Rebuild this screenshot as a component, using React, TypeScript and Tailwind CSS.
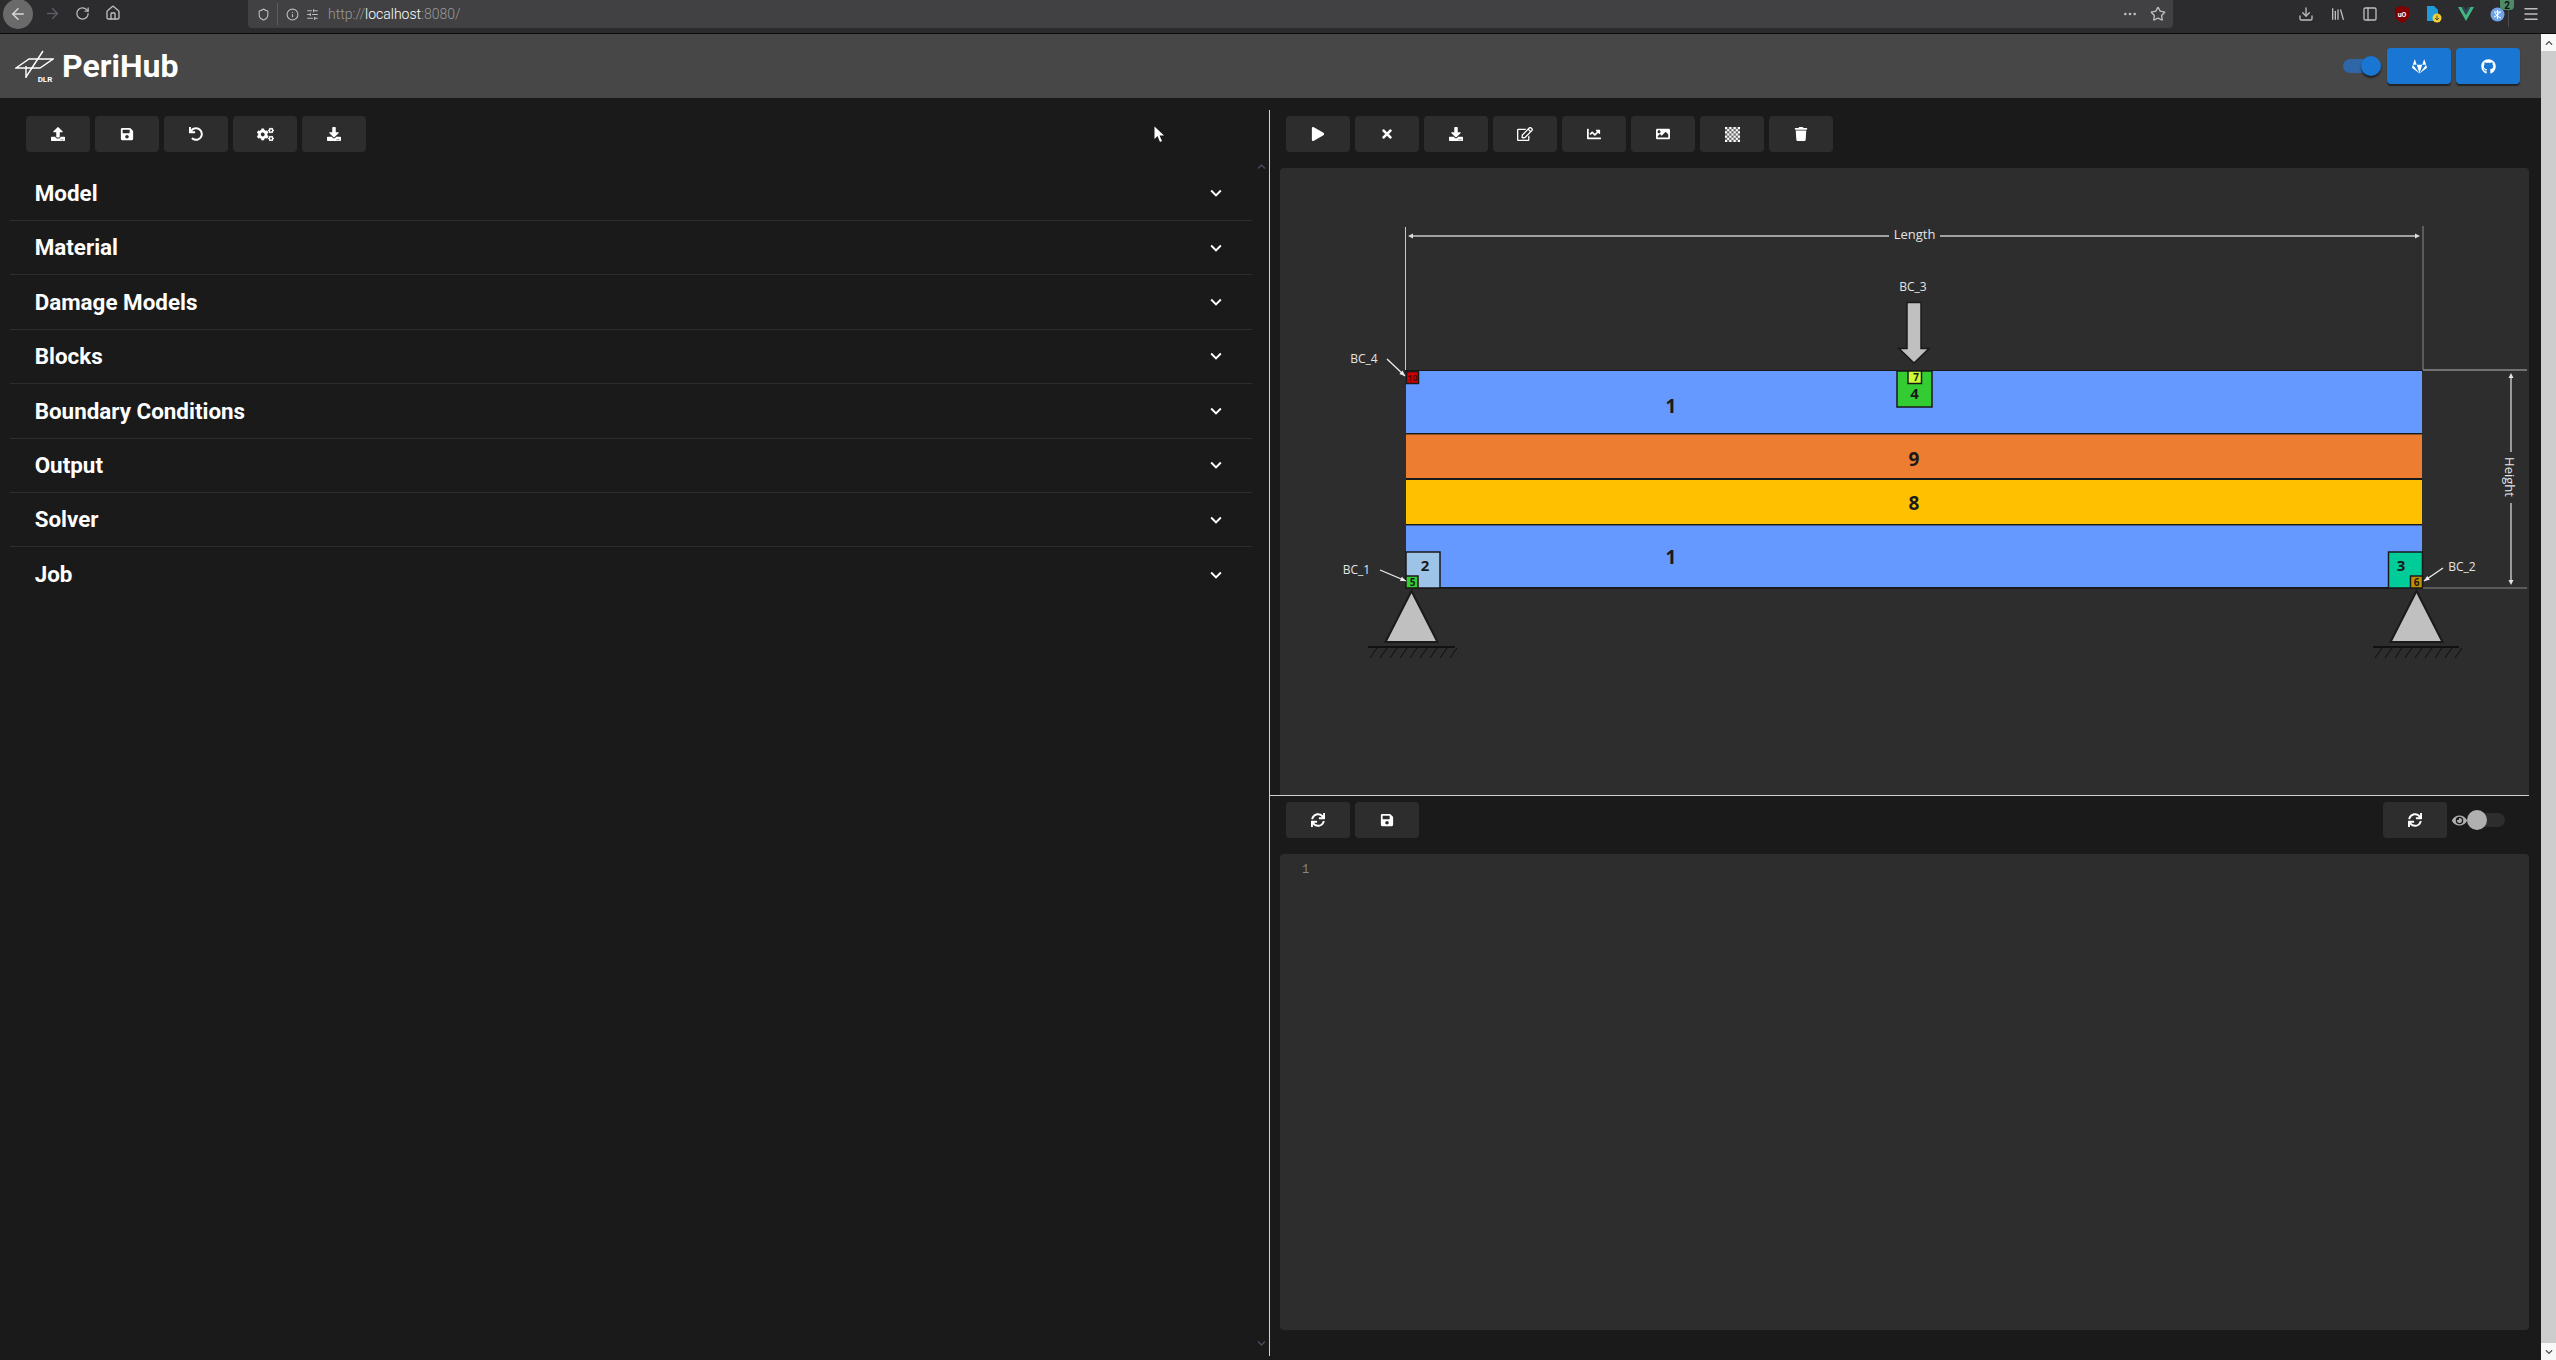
import React from "react";
import { FaUpload, FaSave, FaUndo, FaCogs, FaDownload, FaPlay, FaTimes, FaRegEdit, FaChartLine, FaImage, FaTrash, FaSync, FaEye, FaGitlab, FaGithub, FaChevronUp, FaChevronDown } from "react-icons/fa";
import { MdKeyboardArrowDown } from "react-icons/md";
import { ArrowLeft, ArrowRight, RotateCw, House, Shield, Info, SlidersHorizontal, Star, Download, Library, PanelLeft, Menu, Ellipsis } from "lucide-react";

const sections = ["Model", "Material", "Damage Models", "Blocks", "Boundary Conditions", "Output", "Solver", "Job"];

function ToolBtn({ children }: { children: React.ReactNode }) {
  return (
    <button className="flex h-9 w-16 items-center justify-center rounded bg-[#2d2d2d] text-[14px] text-white">
      {children}
    </button>
  );
}

function Checker() {
  const cells = [];
  for (let y = 0; y < 7; y++) for (let x = 0; x < 7; x++) if ((x + y) % 2 === 0) cells.push(<rect key={`${x}-${y}`} x={x * 2} y={y * 2} width="2" height="2" fill="#fff" />);
  return <svg width="15" height="15" viewBox="0 0 14 14">{cells}<rect width="14" height="14" fill="#fff" opacity="0.25" /></svg>;
}

function Hatch({ x0 }: { x0: number }) {
  const lines = [];
  for (let i = 0; i < 9; i++) lines.push(<line key={i} x1={x0 + i * 10} y1="658" x2={x0 + i * 10 + 7} y2="648" stroke="#0d0d0d" strokeWidth="1" />);
  return <g>{lines}</g>;
}

function Support({ cx, gx0, gx1, hx }: { cx: number; gx0: number; gx1: number; hx: number }) {
  return (
    <g>
      <polygon points={`${cx},591 ${cx + 26},642 ${cx - 26},642`} fill="#c0c0c0" stroke="#1a1a1a" strokeWidth="2" />
      <line x1={gx0} y1="647" x2={gx1} y2="647" stroke="#111" strokeWidth="2" />
      <Hatch x0={hx} />
    </g>
  );
}

function Arrow({ x1, y1, x2, y2 }: { x1: number; y1: number; x2: number; y2: number }) {
  const a = Math.atan2(y2 - y1, x2 - x1);
  const s = 6;
  const p1 = `${x2 - s * Math.cos(a - 0.4)},${y2 - s * Math.sin(a - 0.4)}`;
  const p2 = `${x2 - s * Math.cos(a + 0.4)},${y2 - s * Math.sin(a + 0.4)}`;
  return (
    <g>
      <line x1={x1} y1={y1} x2={x2} y2={y2} stroke="#eee" strokeWidth="1.3" />
      <polygon points={`${x2},${y2} ${p1} ${p2}`} fill="#eee" />
    </g>
  );
}

function Diagram() {
  const label = { fill: "#e4e4e4", fontSize: 12, textAnchor: "middle" as const, dominantBaseline: "central" as const };
  const num = { fill: "#1a1a1a", fontWeight: 700, textAnchor: "middle" as const, dominantBaseline: "central" as const };
  return (
    <svg viewBox="1280 168 1249 627" className="h-full w-full font-['Open_Sans',sans-serif]">
      <line x1="1405.5" y1="227" x2="1405.5" y2="371" stroke="#c8c8c8" strokeWidth="1" />
      <line x1="2423" y1="226" x2="2423" y2="371" stroke="#8a8a8a" strokeWidth="1" />
      <line x1="1410" y1="236" x2="1889" y2="236" stroke="#c8c8c8" strokeWidth="1.3" />
      <line x1="1940" y1="236" x2="2415" y2="236" stroke="#c8c8c8" strokeWidth="1.3" />
      <polygon points="1408,236 1413,233.5 1413,238.5" fill="#ddd" />
      <polygon points="2420,236 2415,233.5 2415,238.5" fill="#ddd" />
      <text x="1914.5" y="233.5" {...label} fontSize={13}>Length</text>

      <rect x="1405" y="370" width="1018" height="1.5" fill="#1a1a1a" />
      <rect x="1406" y="371" width="1016" height="62" fill="#6699ff" />
      <rect x="1406" y="433" width="1016" height="1.5" fill="#1a1a1a" />
      <rect x="1406" y="434.5" width="1016" height="43.5" fill="#ed7d31" />
      <rect x="1406" y="478" width="1016" height="2" fill="#1a1a1a" />
      <rect x="1406" y="480" width="1016" height="44" fill="#ffc000" />
      <rect x="1406" y="524" width="1016" height="1.5" fill="#1a1a1a" />
      <rect x="1406" y="525.5" width="1016" height="61.5" fill="#6699ff" />
      <rect x="1405" y="587" width="1018" height="2" fill="#1a1a1a" />

      <text x="1671" y="405.5" {...num} fontSize={19}>1</text>
      <text x="1671" y="556.5" {...num} fontSize={19}>1</text>
      <text x="1914" y="458.5" {...num} fontSize={19}>9</text>
      <text x="1914" y="502.5" {...num} fontSize={19}>8</text>

      <rect x="1406" y="552" width="34" height="36" fill="#9dc3e6" stroke="#1a1a1a" strokeWidth="1.5" />
      <text x="1425" y="565" {...num} fontSize={15}>2</text>
      <rect x="1406" y="576" width="12" height="12" fill="#33cc33" stroke="#1a1a1a" strokeWidth="1.5" />
      <text x="1412.5" y="581.5" {...num} fontSize={10}>5</text>

      <rect x="2388.5" y="552" width="34" height="36" fill="#00cc99" stroke="#1a1a1a" strokeWidth="1.5" />
      <text x="2401" y="565" {...num} fontSize={15}>3</text>
      <rect x="2410.5" y="576" width="12" height="12" fill="#bf8f00" stroke="#1a1a1a" strokeWidth="1.5" />
      <text x="2416.5" y="581.5" {...num} fontSize={10}>6</text>

      <rect x="1897" y="371" width="35" height="36" fill="#33cc33" stroke="#1a1a1a" strokeWidth="1.5" />
      <text x="1914.5" y="393" {...num} fontSize={15}>4</text>
      <rect x="1908" y="371" width="13.5" height="12.5" fill="#ccff33" stroke="#1a1a1a" strokeWidth="1.5" />
      <text x="1916" y="377" {...num} fontSize={10}>7</text>

      <rect x="1406.5" y="371.5" width="12" height="12" fill="#cc0000" stroke="#1a1a1a" strokeWidth="1.5" />
      <text x="1412.5" y="377.5" {...num} fontSize={9} fill="#5a0000">10</text>

      <polygon points="1907,302.5 1921,302.5 1921,348.5 1929,348.5 1914,363 1899,348.5 1907,348.5" fill="#c0c0c0" stroke="#1a1a1a" strokeWidth="1.5" />
      <text x="1913" y="286" {...label}>BC_3</text>
      <text x="1364" y="358" {...label}>BC_4</text>
      <Arrow x1={1387} y1={359} x2={1405} y2={376} />
      <text x="1356.5" y="569" {...label}>BC_1</text>
      <Arrow x1={1380} y1={570} x2={1406} y2={581} />
      <text x="2462" y="566" {...label}>BC_2</text>
      <Arrow x1={2443} y1={568} x2={2424} y2={581} />

      <Support cx={1411.5} gx0={1368} gx1={1455} hx={1370} />
      <Support cx={2416.5} gx0={2373} gx1={2459} hx={2375} />

      <line x1="2423" y1="370" x2="2527" y2="370" stroke="#8a8a8a" strokeWidth="1.5" />
      <line x1="2423" y1="588" x2="2527" y2="588" stroke="#8a8a8a" strokeWidth="1" />
      <line x1="2511" y1="375" x2="2511" y2="452" stroke="#e4e4e4" strokeWidth="1.2" />
      <line x1="2511" y1="503" x2="2511" y2="583" stroke="#e4e4e4" strokeWidth="1.2" />
      <polygon points="2511,373 2508.5,378 2513.5,378" fill="#e4e4e4" />
      <polygon points="2511,585 2508.5,580 2513.5,580" fill="#e4e4e4" />
      <text x="2510" y="477" {...label} fontSize={13} transform="rotate(90 2510 477)">Height</text>
    </svg>
  );
}

function BrowserBar() {
  const c = "text-[#bdbdbd]";
  return (
    <div className="relative flex h-[34px] items-start border-b border-[#0c0c0d] bg-[#2c2c2e]">
      <div className="flex h-[33px] w-[248px] shrink-0 items-start">
        <div className="ml-[3px] -mt-[1px] flex h-[30px] w-[30px] items-center justify-center rounded-full bg-[#6a6a6a]">
          <ArrowLeft size={18} className="text-[#d8d8d8]" />
        </div>
        <ArrowRight size={17} className="ml-[10.5px] mt-[5px] text-[#5c5c66]" />
        <RotateCw size={15} className={`ml-[14px] mt-[6px] ${c}`} />
        <House size={16} className={`ml-[15px] mt-[5px] ${c}`} />
      </div>
      <div className="flex h-[28px] w-[1925px] shrink-0 items-center rounded-b bg-[#414143]">
        <Shield size={13} className={`ml-[8.5px] ${c}`} />
        <div className="ml-[7px] h-[22px] w-px bg-[#5c5c66]" />
        <Info size={13} className={`ml-[8px] ${c}`} />
        <SlidersHorizontal size={13} className={`ml-[7px] ${c}`} />
        <span className="ml-[9.5px] text-[14px] font-light text-[#9a9a9a]">
          http://<span className="text-white">localhost</span>:8080/
        </span>
        <Ellipsis size={16} className="ml-auto text-[#bdbdbd]" />
        <Star size={16} className={`ml-[12px] mr-[7px] ${c}`} />
      </div>
      <div className="flex h-[28px] flex-1 items-center text-[#bdbdbd]">
        <Download size={16} className="ml-[125px]" />
        <Library size={16} className="ml-[16px]" />
        <PanelLeft size={16} className="ml-[16px]" />
        <svg width="16" height="17" viewBox="0 0 16 17" className="ml-[16px]">
          <path d="M8 0 L15 2 V10 Q14 14 8 17 Q2 14 1 10 V2 Z" fill="#800000" />
          <text x="8" y="11" textAnchor="middle" fontSize="7" fontWeight="700" fill="#fff" fontFamily="Roboto, sans-serif">uO</text>
        </svg>
        <svg width="16" height="17" viewBox="0 0 16 17" className="ml-[16px]">
          <path d="M1 0 H8 L12 4 V15 H1 Z" fill="#1e9bd8" />
          <circle cx="11" cy="12" r="4.5" fill="#f0d030" />
          <path d="M11 9.5 V13 M9 12 L11 14 L13 12" stroke="#444" fill="none" />
        </svg>
        <svg width="16" height="14" viewBox="0 0 16 14" className="ml-[16px]">
          <path d="M0 0 H3.5 L8 8 L12.5 0 H16 L8 14 Z" fill="#41b883" />
          <path d="M3.5 0 H6 L8 3.5 L10 0 H12.5 L8 8 Z" fill="#35495e" />
        </svg>
        <svg width="15" height="15" viewBox="0 0 15 15" className="ml-[16px]">
          <circle cx="7.5" cy="7.5" r="7" fill="#6fa4e8" />
          <path d="M4 5 H11 M7.5 3 V12 M4 10 Q8 9 10 5 M5 6 Q7 10 11 11" stroke="#fff" fill="none" strokeWidth="1" />
        </svg>
        <div className="ml-[3px] h-[26px] w-px bg-[#4a4a4f]" />
        <Menu size={18} className="ml-[13px]" />
      </div>
      <div className="absolute left-[2500px] top-0 flex h-[10px] w-[14px] items-center justify-center rounded-b-sm bg-[#4d8a66] text-[10px] font-bold text-[#111]">2</div>
    </div>
  );
}

function Logo() {
  return (
    <svg width="39" height="34" viewBox="0 0 39 34" className="shrink-0">
      <g stroke="#fff" strokeWidth="1.4" fill="none">
        <path d="M1 19 L14 10 H38 L25 19 Z" />
        <path d="M11 28 L28 2" />
        <path d="M11 29 V17" />
      </g>
      <text x="30" y="33" fontSize="8" fontWeight="700" fill="#fff" textAnchor="middle" fontFamily="Roboto, sans-serif">DLR</text>
    </svg>
  );
}

export default function App() {
  return (
    <div className="flex h-[1360px] w-full flex-col overflow-hidden bg-[#1a1a1a] font-['Roboto',sans-serif] text-white">
      <BrowserBar />
      <div className="flex min-h-0 flex-1">
        <div className="flex w-[2541px] shrink-0 flex-col">
          <header className="flex h-[64px] shrink-0 items-center bg-[#474747] pl-[15px] pr-[21px]">
            <Logo />
            <span className="ml-[8px] text-[32px] font-bold leading-none">PeriHub</span>
            <div className="ml-auto flex items-center">
              <div className="relative mr-[6px] h-[14px] w-[38px]">
                <div className="absolute left-0 top-0 h-[14px] w-[38px] rounded-full bg-[#2f66a8]" />
                <div className="absolute left-[18px] top-[-3px] h-5 w-5 rounded-full bg-[#1976d2] shadow-[0_2px_2px_rgba(0,0,0,0.6)]" />
              </div>
              <div className="flex gap-[5px]">
                <button className="flex h-9 w-16 items-center justify-center rounded bg-[#1976d2] text-[15px] shadow-[0_2px_1px_rgba(0,0,0,0.5)]"><FaGitlab /></button>
                <button className="flex h-9 w-16 items-center justify-center rounded bg-[#1976d2] text-[15px] shadow-[0_2px_1px_rgba(0,0,0,0.5)]"><FaGithub /></button>
              </div>
            </div>
          </header>
          <main className="flex min-h-0 flex-1">
            <section className="relative w-[1269px] shrink-0 pt-[18px]">
              <div className="ml-[26px] flex gap-[5px]">
                <ToolBtn><FaUpload /></ToolBtn>
                <ToolBtn><FaSave /></ToolBtn>
                <ToolBtn><FaUndo /></ToolBtn>
                <ToolBtn><FaCogs className="text-[17px]" /></ToolBtn>
                <ToolBtn><FaDownload /></ToolBtn>
              </div>
              <div className="ml-[10px] mt-[14.6px] w-[1242px]">
                {sections.map((s, i) => (
                  <div key={s} className={`flex h-[54.4px] items-center pl-[24.7px] pr-[25px] ${i < sections.length - 1 ? "border-b border-[#2d2d2d]" : ""}`}>
                    <span className="text-[22.4px] font-bold leading-none">{s}</span>
                    <MdKeyboardArrowDown size={22} className="ml-auto" />
                  </div>
                ))}
              </div>
              <FaChevronUp className="absolute left-[1257px] top-[64px] text-[9px] text-[#4a4a5c]" />
              <FaChevronDown className="absolute left-[1257px] top-[1241px] text-[9px] text-[#4a4a5c]" />
              <svg width="12" height="17" viewBox="0 0 12 17" className="absolute left-[1153.5px] top-[28px]">
                <path d="M0.5 0.5 V13 L3.5 10 L6 16 L8 15 L5.5 9.5 H10 Z" fill="#fff" />
              </svg>
            </section>
            <div className="mb-[4px] mt-[12px] w-px shrink-0 bg-[#d0d0d0]" />
            <section className="flex min-w-0 flex-1 flex-col pr-[12px]">
              <div className="ml-4 mt-[18px] flex gap-[5px]">
                <ToolBtn><FaPlay /></ToolBtn>
                <ToolBtn><FaTimes /></ToolBtn>
                <ToolBtn><FaDownload /></ToolBtn>
                <ToolBtn><FaRegEdit className="text-[16px]" /></ToolBtn>
                <ToolBtn><FaChartLine /></ToolBtn>
                <ToolBtn><FaImage /></ToolBtn>
                <ToolBtn><Checker /></ToolBtn>
                <ToolBtn><FaTrash /></ToolBtn>
              </div>
              <div className="ml-[10px] mt-4 h-[627px] shrink-0 rounded-t-sm bg-[#2d2d2d]">
                <Diagram />
              </div>
              <div className="h-px shrink-0 bg-[#d0d0d0]" />
              <div className="ml-4 mt-[6px] flex items-center gap-[5px]">
                <ToolBtn><FaSync /></ToolBtn>
                <ToolBtn><FaSave /></ToolBtn>
                <div className="ml-auto flex items-center">
                  <ToolBtn><FaSync /></ToolBtn>
                  <FaEye className="ml-[5px] text-[15px] text-[#b0b0b0]" />
                  <div className="relative h-[14px] w-[38px]">
                    <div className="absolute right-0 top-0 h-[14px] w-[38px] rounded-full bg-[#2d2d2d]" />
                    <div className="absolute left-0 top-[-3px] h-5 w-5 rounded-full bg-[#b0b0b0]" />
                  </div>
                  <div className="w-[24px]" />
                </div>
              </div>
              <div className="ml-[10px] mt-4 h-[476px] shrink-0 rounded-sm bg-[#2d2d2d] pl-[22px] pt-[8px] font-['Liberation_Mono',monospace] text-[12px] leading-4 text-[#858585]">
                1
              </div>
            </section>
          </main>
        </div>
        <aside className="flex w-[15px] shrink-0 flex-col bg-[#cdcdcd]">
          <div className="flex h-[17px] items-center justify-center bg-[#f8f8f8]"><FaChevronUp className="text-[8px] text-[#555]" /></div>
          <div className="flex-1" />
          <div className="flex h-[17px] items-center justify-center bg-[#f8f8f8]"><FaChevronDown className="text-[8px] text-[#555]" /></div>
        </aside>
      </div>
    </div>
  );
}
